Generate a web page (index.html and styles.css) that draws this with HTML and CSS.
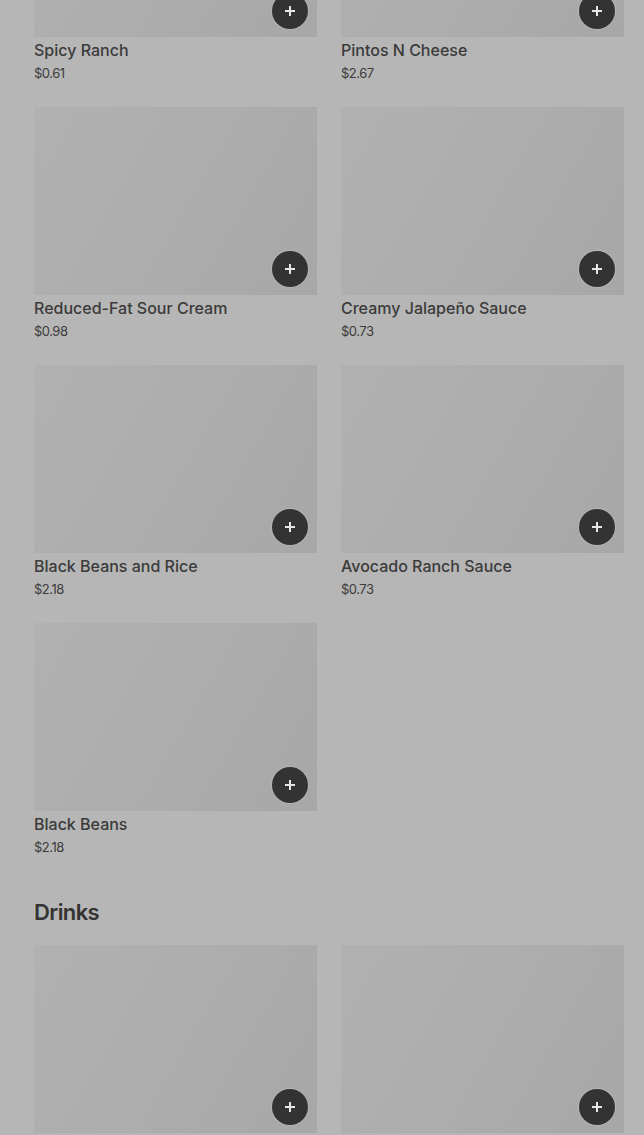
FILE: index.html
```html
<!DOCTYPE html>
<html lang="en">
<head>
    <meta charset="UTF-8">
    <meta name="viewport" content="width=device-width, initial-scale=1.0">
    <title>Menu</title>
    <link rel="stylesheet" href="styles.css">
</head>
<body>
    <main class="menu">
        <section class="menuSection">
            <div class="itemGrid">
                <div class="item">
                    <div class="itemImage">
                        <button class="addButton"><svg viewBox="0 0 12 12"><path d="M6 1v10M1 6h10"/></svg></button>
                    </div>
                    <div class="itemName">Spicy Ranch</div>
                    <div class="itemPrice">$0.61</div>
                </div>
                <div class="item">
                    <div class="itemImage">
                        <button class="addButton"><svg viewBox="0 0 12 12"><path d="M6 1v10M1 6h10"/></svg></button>
                    </div>
                    <div class="itemName">Pintos N Cheese</div>
                    <div class="itemPrice">$2.67</div>
                </div>
                <div class="item">
                    <div class="itemImage">
                        <button class="addButton"><svg viewBox="0 0 12 12"><path d="M6 1v10M1 6h10"/></svg></button>
                    </div>
                    <div class="itemName">Reduced-Fat Sour Cream</div>
                    <div class="itemPrice">$0.98</div>
                </div>
                <div class="item">
                    <div class="itemImage">
                        <button class="addButton"><svg viewBox="0 0 12 12"><path d="M6 1v10M1 6h10"/></svg></button>
                    </div>
                    <div class="itemName">Creamy Jalapeño Sauce</div>
                    <div class="itemPrice">$0.73</div>
                </div>
                <div class="item">
                    <div class="itemImage">
                        <button class="addButton"><svg viewBox="0 0 12 12"><path d="M6 1v10M1 6h10"/></svg></button>
                    </div>
                    <div class="itemName">Black Beans and Rice</div>
                    <div class="itemPrice">$2.18</div>
                </div>
                <div class="item">
                    <div class="itemImage">
                        <button class="addButton"><svg viewBox="0 0 12 12"><path d="M6 1v10M1 6h10"/></svg></button>
                    </div>
                    <div class="itemName">Avocado Ranch Sauce</div>
                    <div class="itemPrice">$0.73</div>
                </div>
                <div class="item">
                    <div class="itemImage">
                        <button class="addButton"><svg viewBox="0 0 12 12"><path d="M6 1v10M1 6h10"/></svg></button>
                    </div>
                    <div class="itemName">Black Beans</div>
                    <div class="itemPrice">$2.18</div>
                </div>
            </div>
        </section>

        <section class="menuSection">
            <h2 class="sectionTitle">Drinks</h2>
            <div class="itemGrid">
                <div class="item">
                    <div class="itemImage">
                        <button class="addButton"><svg viewBox="0 0 12 12"><path d="M6 1v10M1 6h10"/></svg></button>
                    </div>
                    <div class="itemName">Mountain Dew Baja Blast</div>
                    <div class="itemPrice">$2.49</div>
                </div>
                <div class="item">
                    <div class="itemImage">
                        <button class="addButton"><svg viewBox="0 0 12 12"><path d="M6 1v10M1 6h10"/></svg></button>
                    </div>
                    <div class="itemName">Pepsi</div>
                    <div class="itemPrice">$2.49</div>
                </div>
            </div>
        </section>
    </main>
</body>
</html>
```

FILE: styles.css
```css
body {
    margin: 0;
    background-color: #b6b6b6;
    font-family: "Inter", "Roboto", sans-serif;
    color: #333333;
    height: 1135px;
    overflow: hidden;
}

.menu {
    padding: 0 20px 0 34px;
    margin-top: -151px;
}

.itemGrid {
    display: grid;
    grid-template-columns: 283px 283px;
    column-gap: 24px;
    row-gap: 24px;
}

.item {
    display: flex;
    flex-direction: column;
}

.itemImage {
    position: relative;
    height: 188px;
    background: linear-gradient(120deg, #b1b1b1 0%, #adadad 50%, #a7a7a7 100%);
}

.addButton {
    position: absolute;
    right: 9px;
    bottom: 8px;
    display: flex;
    align-items: center;
    justify-content: center;
    width: 36px;
    height: 36px;
    padding: 0;
    border: none;
    border-radius: 50%;
    background-color: #333333;
    box-shadow: 0 0 0 1px rgba(255, 255, 255, 0.15);
    cursor: pointer;
}

.addButton svg {
    width: 12px;
    height: 12px;
    stroke: #e6e6e6;
    stroke-width: 2;
    fill: none;
}

.itemName {
    margin-top: 2px;
    font-size: 16px;
    font-weight: 500;
    line-height: 22px;
    color: #3b3b3b;
}

.itemPrice {
    margin-top: 2px;
    font-size: 13px;
    line-height: 20px;
    letter-spacing: -0.5px;
    color: #3b3b3b;
}

.sectionTitle {
    margin: 39px 0 17px;
    font-size: 22px;
    font-weight: 600;
    line-height: 32px;
    letter-spacing: -0.6px;
    color: #333333;
}
```
